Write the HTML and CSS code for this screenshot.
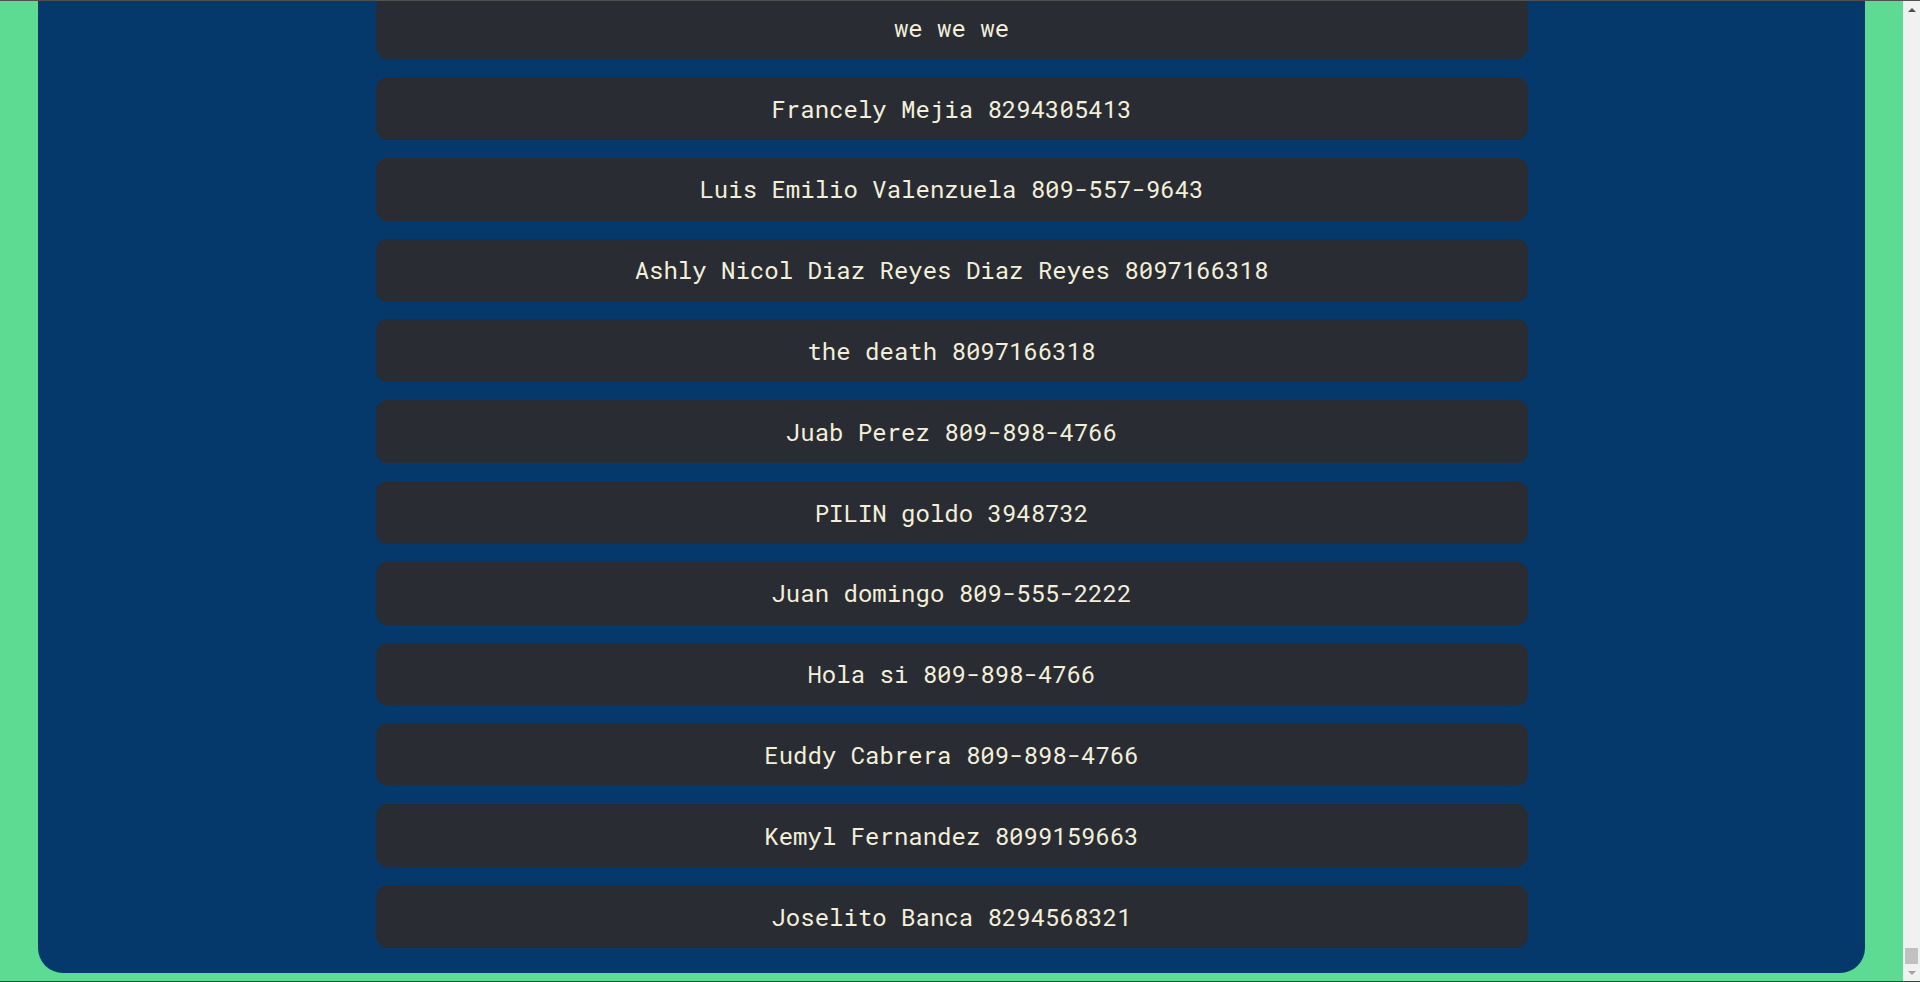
FILE: index.html
```html
<!DOCTYPE html>
<html lang="es">
<head>
<meta charset="utf-8">
<title>Contactos</title>
<link rel="stylesheet" href="styles.css">
</head>
<body>
<div class="window">
  <div class="viewport">
    <main class="panel">
      <ul class="contacts">
        <li class="contact">we we we</li>
        <li class="contact">Francely Mejia 8294305413</li>
        <li class="contact">Luis Emilio Valenzuela 809-557-9643</li>
        <li class="contact">Ashly Nicol Diaz Reyes Diaz Reyes 8097166318</li>
        <li class="contact">the death 8097166318</li>
        <li class="contact">Juab Perez 809-898-4766</li>
        <li class="contact">PILIN goldo 3948732</li>
        <li class="contact">Juan domingo 809-555-2222</li>
        <li class="contact">Hola si 809-898-4766</li>
        <li class="contact">Euddy Cabrera 809-898-4766</li>
        <li class="contact">Kemyl Fernandez 8099159663</li>
        <li class="contact">Joselito Banca 8294568321</li>
      </ul>
    </main>
  </div>
  <div class="scrollbar" aria-hidden="true">
    <div class="sb-btn"><span class="arrow-up"></span></div>
    <div class="sb-track">
      <div class="sb-thumb"></div>
    </div>
    <div class="sb-btn"><span class="arrow-down"></span></div>
  </div>
</div>
</body>
</html>
```

FILE: styles.css
```css
html, body {
  margin: 0;
  padding: 0;
  height: 100%;
  overflow: hidden;
}
body {
  font-family: "Roboto Mono", "DejaVu Sans Mono", "Liberation Mono", monospace;
  background: #5ddb93;
}
.window {
  height: 100vh;
  box-sizing: border-box;
  display: flex;
  border-top: 1px solid #505050;
  border-bottom: 1px solid #264d38;
}
.viewport {
  flex: 1;
  min-width: 0;
  display: flex;
  flex-direction: column;
  padding: 0 38px 8px;
  background: #5ddb93;
}
.panel {
  flex: 1;
  min-height: 0;
  overflow: hidden;
  background: #05396b;
  border-radius: 0 0 25px 25px;
  display: flex;
  flex-direction: column;
  justify-content: flex-end;
  padding-bottom: 25px;
}
.contacts {
  list-style: none;
  margin: 0 auto;
  padding: 0;
  width: 1152px;
  display: flex;
  flex-direction: column;
  gap: 17.8px;
  flex-shrink: 0;
}
.contact {
  flex-shrink: 0;
  background: #2a2c34;
  border-radius: 12px;
  height: 63px;
  display: flex;
  align-items: center;
  justify-content: center;
  color: #f3efd9;
  font-size: 24px;
  white-space: pre;
}
.scrollbar {
  width: 17px;
  flex-shrink: 0;
  background: #f1f1f1;
  display: flex;
  flex-direction: column;
}
.sb-btn {
  height: 17px;
  display: flex;
  align-items: center;
  justify-content: center;
}
.arrow-up {
  width: 0;
  height: 0;
  border-left: 4px solid transparent;
  border-right: 4px solid transparent;
  border-bottom: 4px solid #505050;
}
.arrow-down {
  width: 0;
  height: 0;
  border-left: 4px solid transparent;
  border-right: 4px solid transparent;
  border-top: 4px solid #a3a3a3;
}
.sb-track {
  flex: 1;
  display: flex;
  flex-direction: column;
  justify-content: flex-end;
  padding: 0 2px;
}
.sb-thumb {
  height: 16px;
  background: #c1c1c1;
}
```
